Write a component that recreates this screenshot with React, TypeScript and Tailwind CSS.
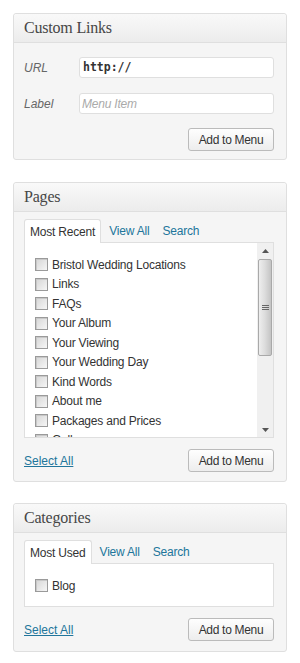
import React from 'react';

const pages = [
  'Bristol Wedding Locations',
  'Links',
  'FAQs',
  'Your Album',
  'Your Viewing',
  'Your Wedding Day',
  'Kind Words',
  'About me',
  'Packages and Prices',
  'Gallery',
];

const Panel = ({ title, children }: { title: string; children: React.ReactNode }) => (
  <div className="mx-[13px] w-[274px] rounded-[3px] border border-[#dfdfdf] bg-[#f5f5f5] shadow-[inset_0_1px_0_#fff]">
    <div className="h-[29px] border-b border-[#dfdfdf] bg-gradient-to-b from-[#f9f9f9] to-[#ececec] rounded-t-[3px] pl-[10px] pt-[5px] font-['Georgia','Liberation_Serif',serif] text-[16px] leading-[18px] tracking-[-0.2px] text-[#464646]">
      {title}
    </div>
    {children}
  </div>
);

const AddButton = () => (
  <button className="h-[23px] w-[86px] rounded-[3px] border border-[#bbb] bg-gradient-to-b from-[#fefefe] to-[#ededed] text-[12px] tracking-[-0.3px] text-[#333]">
    Add to Menu
  </button>
);

const Checkbox = () => (
  <span className="inline-block h-[13px] w-[13px] shrink-0 border border-[#9a9a9a] bg-gradient-to-br from-[#d6d6d6] to-[#f6f6f6] shadow-[inset_1px_1px_0_#c8c8c8]" />
);

const Tabs = ({ active, rest }: { active: string; rest: string[] }) => (
  <div className="flex h-[23px] items-end text-[12px] tracking-[-0.2px]">
    <div className="relative z-10 -mb-px h-[24px] rounded-t-[3px] border border-b-0 border-[#dfdfdf] bg-white px-[5px] pt-[3px] text-[#333]">
      {active}
    </div>
    {rest.map((t, i) => (
      <div key={t} className={`h-[23px] pt-[3px] text-[#21759b] ${i === 0 ? 'pl-[8px]' : 'pl-[13px]'}`}>
        {t}
      </div>
    ))}
  </div>
);

const Scrollbar = () => (
  <div className="flex w-[16px] shrink-0 flex-col bg-[#f0f0f0]">
    <div className="flex h-[16px] items-center justify-center">
      <svg width="7" height="4" viewBox="0 0 7 4"><path d="M3.5 0L7 4H0z" fill="#555" /></svg>
    </div>
    <div className="mx-[1px] flex h-[97px] items-center justify-center rounded-[2px] border border-[#a9a9a9] bg-gradient-to-r from-[#eeeeee] via-[#dcdcdc] to-[#c4c4c4]">
      <svg width="7" height="6" viewBox="0 0 7 6">
        <path d="M0 0.5H7M0 2.5H7M0 4.5H7" stroke="#666" strokeWidth="1" />
      </svg>
    </div>
    <div className="flex-1" />
    <div className="flex h-[14px] items-center justify-center">
      <svg width="7" height="4" viewBox="0 0 7 4"><path d="M0 0H7L3.5 4z" fill="#555" /></svg>
    </div>
  </div>
);

export default function App() {
  return (
    <div className="min-h-[663px] bg-white pt-[13px] font-['Liberation_Sans',Arial,sans-serif]">
      <Panel title="Custom Links">
        <div className="pl-[10px] pr-[12px] pt-[14px] pb-[8px]">
          <div className="flex items-center">
            <span className="w-[55px] text-[12px] italic text-[#666]">URL</span>
            <div className="flex h-[21px] flex-1 items-center rounded-[3px] border border-[#dfdfdf] bg-white pl-[3px] font-['DejaVu_Sans_Mono',monospace] text-[11.5px] font-bold text-[#333]">
              http://
            </div>
          </div>
          <div className="mt-[15px] flex items-center">
            <span className="w-[55px] text-[12px] italic text-[#666]">Label</span>
            <div className="flex h-[21px] flex-1 items-center rounded-[3px] border border-[#dfdfdf] bg-white pl-[2px] text-[12px] italic tracking-[-0.2px] text-[#aaa]">
              Menu Item
            </div>
          </div>
          <div className="mt-[14px] flex justify-end">
            <AddButton />
          </div>
        </div>
      </Panel>

      <div className="h-[22px]" />

      <Panel title="Pages">
        <div className="pl-[10px] pr-[12px] pt-[7px] pb-[9px]">
          <Tabs active="Most Recent" rest={['View All', 'Search']} />
          <div className="flex h-[196px] border border-[#dfdfdf] bg-white">
            <div className="flex-1 overflow-hidden pl-[10px] pt-[12px] text-[12px] tracking-[-0.2px] text-[#333]">
              {pages.map((p) => (
                <div key={p} className="flex h-[19.5px] items-center gap-[4px]">
                  <Checkbox />
                  <span>{p}</span>
                </div>
              ))}
            </div>
            <Scrollbar />
          </div>
          <div className="mt-[11px] flex items-center justify-between">
            <span className="text-[12px] text-[#21759b] underline">Select All</span>
            <AddButton />
          </div>
        </div>
      </Panel>

      <div className="h-[21px]" />

      <Panel title="Categories">
        <div className="pl-[10px] pr-[12px] pt-[7px] pb-[10px]">
          <Tabs active="Most Used" rest={['View All', 'Search']} />
          <div className="h-[44px] border border-[#dfdfdf] bg-white pl-[10px] pt-[12px] text-[12px] tracking-[-0.2px] text-[#333]">
            <div className="flex h-[19px] items-center gap-[4px]">
              <Checkbox />
              <span>Blog</span>
            </div>
          </div>
          <div className="mt-[11px] flex items-center justify-between">
            <span className="text-[12px] text-[#21759b] underline">Select All</span>
            <AddButton />
          </div>
        </div>
      </Panel>
    </div>
  );
}
